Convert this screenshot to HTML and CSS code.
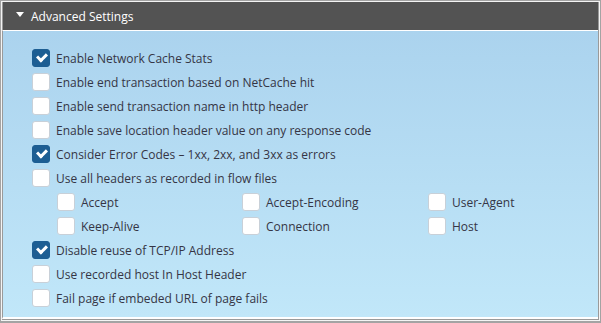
FILE: index.html
```html
<!DOCTYPE html>
<html>
<head>
<meta charset="utf-8">
<link rel="stylesheet" href="styles.css">
</head>
<body>
<div class="panel">
  <div class="inner">
    <div class="header"><span class="caret"></span><span class="title">Advanced Settings</span></div>
    <div class="body">
      <div class="row"><span class="cb on"></span><span>Enable Network Cache Stats</span></div>
      <div class="row"><span class="cb"></span><span>Enable end transaction based on NetCache hit</span></div>
      <div class="row"><span class="cb"></span><span>Enable send transaction name in http header</span></div>
      <div class="row"><span class="cb"></span><span>Enable save location header value on any response code</span></div>
      <div class="row"><span class="cb on"></span><span>Consider Error Codes – 1xx, 2xx, and 3xx as errors</span></div>
      <div class="row"><span class="cb"></span><span>Use all headers as recorded in flow files</span></div>
      <div class="grid">
        <div class="row"><span class="cb"></span><span>Accept</span></div>
        <div class="row"><span class="cb"></span><span>Accept-Encoding</span></div>
        <div class="row"><span class="cb"></span><span>User-Agent</span></div>
        <div class="row"><span class="cb"></span><span>Keep-Alive</span></div>
        <div class="row"><span class="cb"></span><span>Connection</span></div>
        <div class="row"><span class="cb"></span><span>Host</span></div>
      </div>
      <div class="row"><span class="cb on"></span><span>Disable reuse of TCP/IP Address</span></div>
      <div class="row"><span class="cb"></span><span>Use recorded host In Host Header</span></div>
      <div class="row"><span class="cb"></span><span>Fail page if embeded URL of page fails</span></div>
    </div>
  </div>
</div>
</body>
</html>
```
FILE: styles.css
```css
html, body { margin: 0; padding: 0; background: #ffffff; }
body { font-family: "Open Sans", "Liberation Sans", sans-serif; font-size: 12px; color: #353545; }
.panel {
  width: 601px; height: 323px; box-sizing: border-box;
  border: 1px solid #a3a3a3; border-bottom-width: 2px; border-right-width: 1px;
  padding: 1px; background: #f4f4f4;
}
.inner {
  height: 100%; box-sizing: border-box;
  border: 1px solid #9a9a9a; border-top: 0; border-left: 0; display: flex; flex-direction: column;
  background: #ffffff;
}
.header {
  height: 28px; background: #535353; display: flex; align-items: center;
  border-bottom: 1px solid #ffffff; box-sizing: content-box;
  border-left: 1px solid #9a9a9a;
}
.caret {
  width: 0; height: 0; margin-left: 13px; margin-right: 7px;
  border-left: 4px solid transparent; border-right: 4px solid transparent; border-top: 5px solid #ffffff;
  margin-top: -3px;
}
.title { color: #ffffff; font-size: 12px; }
.body {
  flex: 1; background: linear-gradient(to bottom, #abd3ee, #c1e7f9);
  border-left: 1px solid #9a9a9a; border-bottom: 2px solid #ffffff;
  padding: 15px 0 0 29px; display: flex; flex-direction: column;
}
.row { display: flex; align-items: center; height: 24px; }
.cb {
  width: 16px; height: 16px; border: 1px solid #c8d0d8; border-radius: 3px; background: #ffffff;
  margin-right: 6px; flex: none; position: relative;
}
.cb.on { background: #1d5e93; border-color: #1d5e93; }
.cb.on::after {
  content: ""; position: absolute; left: 3.5px; top: 3px; width: 7px; height: 4px;
  border-left: 3px solid #ffffff; border-bottom: 3px solid #ffffff; transform: rotate(-45deg);
}
.grid { display: grid; grid-template-columns: 185px 186px 150px; padding-left: 25px; }
```
